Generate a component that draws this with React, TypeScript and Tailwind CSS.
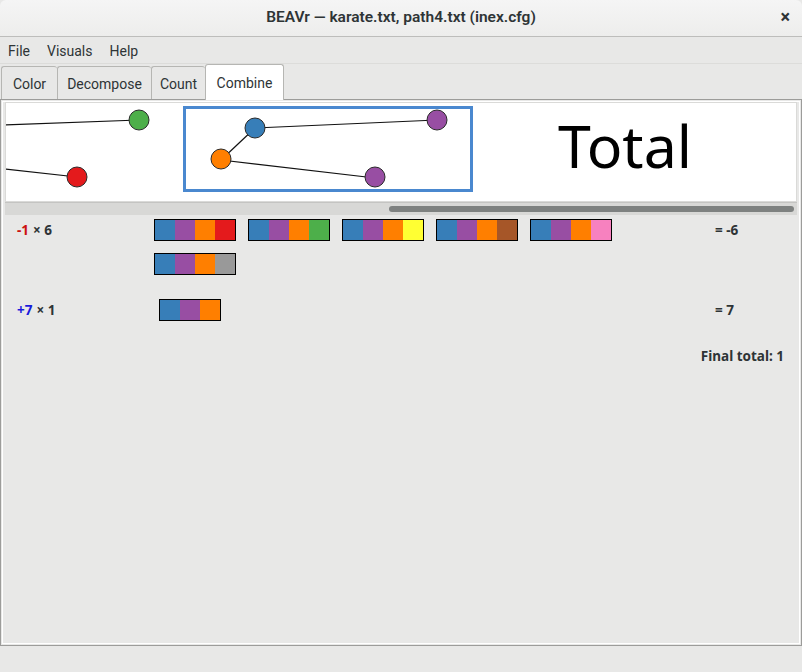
const bars: string[][] = [
  ["#377eb8", "#984ea3", "#ff7f00", "#e41a1c"],
  ["#377eb8", "#984ea3", "#ff7f00", "#4daf4a"],
  ["#377eb8", "#984ea3", "#ff7f00", "#ffff33"],
  ["#377eb8", "#984ea3", "#ff7f00", "#a65628"],
  ["#377eb8", "#984ea3", "#ff7f00", "#f781bf"],
  ["#377eb8", "#984ea3", "#ff7f00", "#999999"],
];

const Bar = ({ colors }: { colors: string[] }) => (
  <div className="flex h-[22px] border border-black">
    {colors.map((c, i) => (
      <div key={i} className="w-[20px] h-full" style={{ background: c }} />
    ))}
  </div>
);

const Node = ({ x, y, fill }: { x: number; y: number; fill: string }) => (
  <circle cx={x} cy={y} r={10} fill={fill} stroke="#2a2a2a" strokeWidth={1} />
);

const tabs = [
  { label: "Color", w: "w-[56px]" },
  { label: "Decompose", w: "w-[94px]" },
  { label: "Count", w: "w-[54px]" },
];

export default function App() {
  return (
    <div className="w-[802px] h-[672px] bg-[#e8e8e7] flex flex-col text-[#2e3436] font-['Roboto',sans-serif] overflow-hidden">
      {/* title bar */}
      <div className="h-[37px] shrink-0 flex items-center justify-center relative bg-gradient-to-b from-[#f5f5f5] to-[#ededec] border-b border-[#bdbdbb] rounded-t-[6px]">
        <span className="text-[15.5px] font-semibold text-[#2e3436]">
          BEAVr — karate.txt, path4.txt (inex.cfg)
        </span>
        <span className="absolute right-[12px] top-[8px] text-[18px] font-bold leading-none">
          ×
        </span>
      </div>

      {/* menu */}
      <div className="h-[27px] shrink-0 flex items-center gap-[17px] pl-[8px] pt-[3px] text-[14px] border-b border-[#dcdcda]">
        <span>File</span>
        <span>Visuals</span>
        <span>Help</span>
      </div>

      {/* tabs */}
      <div className="h-[35px] shrink-0 flex items-end pl-[1px] text-[14px] relative z-10">
        {tabs.map((t) => (
          <div
            key={t.label}
            className={`${t.w} h-[33px] flex items-center justify-center pt-[3px] border-t border-l border-[#b6b6b3] rounded-t-[3px] bg-[#e8e8e7] last:border-r`}
          >
            {t.label}
          </div>
        ))}
        <div className="w-[79px] h-[36px] -mb-[1px] flex items-center justify-center pt-[1px] border border-b-0 border-[#b6b6b3] rounded-t-[3px] bg-white">
          Combine
        </div>
      </div>

      {/* notebook */}
      <div className="h-[547px] shrink-0 border border-[#9c9c9a] p-[1px]">
        <div className="h-full border border-white flex flex-col pl-[2px] pr-[2px]">
          {/* canvas */}
          <div className="h-[100px] shrink-0 bg-white border border-[#dadad8] flex">
            <svg width={548} height={98} className="shrink-0">
              <g transform="translate(-6,-102)">
                <line x1={5} y1={124} x2={139} y2={119} stroke="#111" strokeWidth={1.2} />
                <line x1={5} y1={168} x2={77} y2={176} stroke="#111" strokeWidth={1.2} />
                <Node x={139} y={119} fill="#4daf4a" />
                <Node x={77} y={176} fill="#e41a1c" />
                <rect x={184.5} y={106.5} width={287} height={83} fill="none" stroke="#4a88cf" strokeWidth={3} />
                <line x1={255} y1={127} x2={437} y2={119} stroke="#111" strokeWidth={1.2} />
                <line x1={255} y1={127} x2={221} y2={159} stroke="#111" strokeWidth={1.2} />
                <line x1={221} y1={159} x2={375} y2={177} stroke="#111" strokeWidth={1.2} />
                <Node x={255} y={127} fill="#377eb8" />
                <Node x={221} y={158} fill="#ff7f00" />
                <Node x={437} y={119} fill="#984ea3" />
                <Node x={375} y={176} fill="#984ea3" />
              </g>
            </svg>
            <div className="ml-[4px] pt-[13px] text-[59px] leading-[58px] text-black font-['Noto_Sans',sans-serif]">
              Total
            </div>
          </div>
          {/* scrollbar */}
          <div className="h-[13px] shrink-0 bg-[#d8d8d6] border-t border-[#c4c4c2] flex items-center pl-[384px] pr-[3px]">
            <div className="h-[6px] flex-1 rounded-full bg-[#7e8180]" />
          </div>

          {/* rows */}
          <div className="flex-1 pt-[4px] font-['Noto_Sans',sans-serif] font-bold text-[13.5px] text-[#2e3436]">
            <div className="flex">
              <div className="w-[149px] pl-[12px] h-[22px] flex items-center">
                <span className="text-[#cc1111]">-1</span>
                <span className="ml-[4px]">× 6</span>
              </div>
              <div className="w-[561px]">
                <div className="w-[540px] flex flex-wrap gap-x-[12px] gap-y-[12px]">
                  {bars.map((b, i) => (
                    <Bar key={i} colors={b} />
                  ))}
                </div>
              </div>
              <div className="h-[22px] flex items-center">= -6</div>
            </div>

            <div className="flex mt-[24px]">
              <div className="w-[154px] pl-[12px] h-[22px] flex items-center">
                <span className="text-[#1a1adb]">+7</span>
                <span className="ml-[4px]">× 1</span>
              </div>
              <div className="w-[556px]">
                <div className="inline-flex">
                  <Bar colors={["#377eb8", "#984ea3", "#ff7f00"]} />
                </div>
              </div>
              <div className="h-[22px] flex items-center">= 7</div>
            </div>

            <div className="flex justify-end pr-[13px] mt-[21px]">Final total: 1</div>
          </div>
        </div>
      </div>

      {/* status */}
      <div className="flex-1" />
    </div>
  );
}
